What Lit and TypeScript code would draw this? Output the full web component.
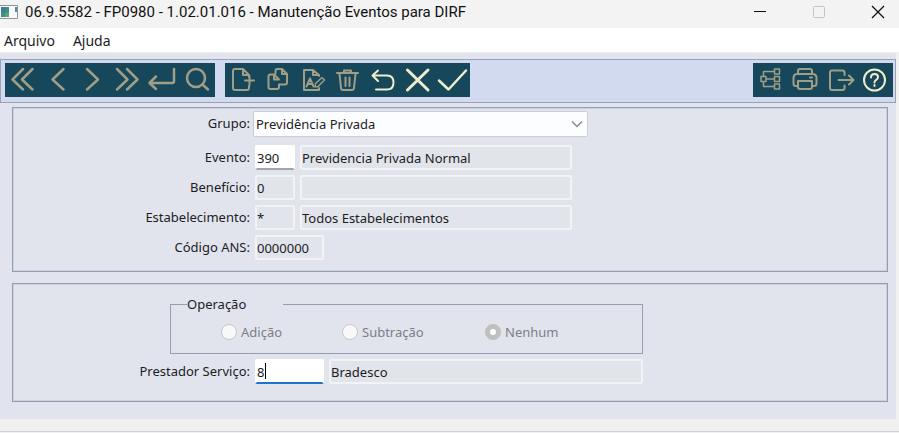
import { LitElement, html, css, svg, SVGTemplateResult } from "lit";
import { customElement, property, state } from "lit/decorators.js";

interface ToolButton {
  label: string;
  icon: SVGTemplateResult;
  active?: boolean;
}

const navigation: ToolButton[] = [
  { label: "Primeiro", icon: svg`<path d="M18 6 7.5 16.5 18 26.5M27.5 6 17 16.5l10.500 10"/>` },
  { label: "Anterior", icon: svg`<path d="M23.500 6 12.500 16.500l11 10"/>` },
  { label: "Próximo", icon: svg`<path d="m12 6 11 10.500-11 10"/>` },
  { label: "Último", icon: svg`<path d="m7 6 10.500 10.500L7 26.500M17 6l10.500 10.500-10.500 10"/>` },
  { label: "Confirmar chave", icon: svg`<path d="M29 6v12q0 2-2 2H5M11 13.500 4.500 20l6.500 6"/>` },
  { label: "Pesquisar", icon: svg`<circle cx="16" cy="15" r="9"/><path d="m22.500 21.500 5.500 5"/>` },
];

const editing: ToolButton[] = [
  {
    label: "Incluir",
    icon: svg`<path stroke-width="2" d="M24 14v-2l-6-6H10q-2 0-2 2v17q0 2 2 2h12q2 0 2-2v-2M18 6v6h6M20 17.500h9M24.500 13v9"/>`,
  },
  {
    label: "Copiar",
    icon: svg`<path stroke-width="2" d="M14 11.500h-3.500q-2 0-2 2V24q0 2 2 2H17q2 0 2-2v-2.500M14 11.500l5 5M14 11.500v5h5M22 6h-4.500q-2 0-2 2v2.500M22 6l5 5v8.500q0 2-2 2h-6M22 6v5h5"/>`,
  },
  {
    label: "Alterar",
    icon: svg`<path stroke-width="2" d="M24 13v-1l-6-5H9v20h15v-2M18 7v5h6"/><path stroke-width="2" d="m11.500 23.500 3.500-8 3.500 8M13 21h4"/><path stroke-width="1.500" d="m20 24 .5-3.500 6.500-6 2.500 2.500-6.500 6.500z"/>`,
  },
  {
    label: "Excluir",
    icon: svg`<path stroke-width="2" d="M7 10h21M14 9.500V7.500h7v2M9.500 11l1.500 14q.2 2 2 2h9q1.800 0 2-2l1.500-14M15.500 14.500V23M19.500 14.500V23"/>`,
  },
  { label: "Desfazer", active: true, icon: svg`<path stroke-width="2" d="M13 7.500 7.500 12.500 13 18M7.500 12.500H22q6.500 0 6.500 7t-6.500 7H11"/>` },
  { label: "Cancelar", active: true, icon: svg`<path stroke-width="3" d="m7.500 7 20.500 20M28 7 7.500 27"/>` },
  { label: "Confirmar", active: true, icon: svg`<path d="m4 17.500 9.500 9L31 7.500"/>` },
];

const utilities: ToolButton[] = [
  {
    label: "Estrutura",
    icon: svg`<path stroke-width="1.500" d="M8 13.500h5v5H8zM21.500 6h5v5h-5zM21.500 13.500h5v5h-5zM21.500 21h5v5h-5zM10.500 13.500v-5h11M13 16h8.500M10.500 18.500v5h11"/>`,
  },
  {
    label: "Imprimir",
    icon: svg`<path stroke-width="2" d="M10 11V8q0-2 2-2h10q2 0 2 2v3M10 23H8q-2.500 0-2.500-2.500V15q0-4 4-4h15q4 0 4 4v5.500q0 2.500-2.500 2.500h-2M10 18h14v6q0 2-2 2H12q-2 0-2-2zM22 14.500h2"/>`,
  },
  {
    label: "Sair",
    icon: svg`<path stroke-width="2" d="M21.500 12v-2.500q0-2-2-2H9q-2 0-2 2V25q0 2 2 2h10.500q2 0 2-2v-2.500M15.500 17H30M26 12.500l4.500 4.500-4.500 4.500"/>`,
  },
  {
    label: "Ajuda",
    active: true,
    icon: svg`<circle stroke-width="2" cx="16.500" cy="17" r="10.500"/><path stroke-width="2" d="M13 14.500q0-3.500 3.500-3.500t3.500 3q0 2-2 3-1.500 1-1.500 2.500M16.500 22v1"/>`,
  },
];

@customElement("tool-group")
export class ToolGroup extends LitElement {
  @property({ attribute: false }) items: ToolButton[] = [];

  static styles = css`
    :host {
      display: flex;
      background: #17475a;
    }
    .tool {
      width: 35px;
      height: 34px;
      padding: 0;
      border: 0;
      background: none;
      color: #a19e86;
    }
    .active {
      color: #f0edcb;
    }
    .icon {
      display: block;
      width: 35px;
      height: 34px;
      fill: none;
      stroke: currentColor;
      stroke-width: 2.5;
      stroke-linecap: round;
      stroke-linejoin: round;
    }
  `;

  render() {
    return this.items.map(
      (item) => html`<button class="tool ${item.active ? "active" : ""}" aria-label=${item.label}>
        <svg class="icon" viewBox="0 0 35 34" aria-hidden="true">${item.icon}</svg>
      </button>`,
    );
  }
}

@customElement("app-root")
export class AppRoot extends LitElement {
  @state() private provider = "8";

  static styles = css`
    :host {
      display: flex;
      flex-direction: column;
      min-height: 100vh;
      background: #f0f0f0;
      color: #1c1c24;
      font: 13px/16px "Noto Sans", sans-serif;
    }
    * {
      box-sizing: border-box;
    }
    .titlebar {
      display: flex;
      align-items: center;
      height: 28px;
      padding-bottom: 4px;
      background: #f3f3f3;
      color: #111;
    }
    .appicon {
      width: 18px;
      height: 14px;
      margin-right: 7px;
    }
    .title {
      flex: 1;
      margin: 0;
      font: 15px/20px Roboto, sans-serif;
      white-space: nowrap;
    }
    .controls {
      display: flex;
      gap: 17px;
    }
    .winbtn {
      width: 42px;
      height: 24px;
      padding: 0;
      border: 0;
      background: none;
    }
    .winicon {
      display: block;
      width: 14px;
      height: 14px;
      margin: 0 auto;
      fill: none;
      stroke: #111;
    }
    .menubar {
      display: flex;
      gap: 18px;
      height: 24px;
      padding: 4px;
      background: #fff;
    }
    .menuitem {
      padding: 0;
      border: 0;
      background: none;
      color: inherit;
      font: 14px/18px "Noto Sans", sans-serif;
    }
    .workspace {
      display: flex;
      flex-direction: column;
      margin-right: 3px;
      padding: 6px 0 17px;
      border-top: 1px solid #f0f0f0;
      background: #e1e4ed;
    }
    .toolbar {
      display: flex;
      align-items: flex-start;
      gap: 10px;
      height: 44px;
      padding: 3px 2px 0 4px;
      border: 1px solid #99a3b6;
      background: #d1daee;
    }
    .utilities {
      margin-left: auto;
    }
    .panel {
      display: flex;
      flex-direction: column;
      margin: 4px 8px 0 12px;
      border: 1px solid #929db0;
      box-shadow: inset 0 0 0 1px #cbd1de;
    }
    .record {
      gap: 5px;
      padding: 3px 0 11px;
    }
    .details {
      gap: 5px;
      margin-top: 11px;
      padding: 12px 0 17px;
    }
    .row {
      display: flex;
      gap: 5px;
      height: 25px;
    }
    .grouprow {
      gap: 3px;
      height: 26px;
      margin-bottom: 3px;
    }
    .caption {
      width: 237px;
      padding-top: 4px;
      text-align: right;
      white-space: nowrap;
    }
    .field {
      width: 40px;
      height: 25px;
      padding: 0;
      border: 2px solid #f2f3f5;
      border-radius: 2px;
      background: #e1e4ea;
      color: inherit;
      font: inherit;
      outline: none;
    }
    .medium {
      width: 69px;
    }
    .wide {
      width: 272px;
    }
    .wider {
      width: 314px;
    }
    .editable {
      border-color: #fff;
      border-bottom: 2px solid #a4a4a6;
      background: #fff;
    }
    .focused {
      border-bottom-color: #1a76c8;
      caret-color: transparent;
    }
    .caretbox {
      position: relative;
      display: flex;
    }
    .caret {
      position: absolute;
      left: 10px;
      top: 4px;
      width: 1px;
      height: 16px;
      background: #000;
    }
    .selectbox {
      display: grid;
      align-items: center;
      width: 335px;
    }
    .select {
      grid-area: 1 / 1;
      width: 100%;
      height: 26px;
      padding: 0 2px;
      border: 1px solid #c8cfd9;
      border-radius: 2px;
      background: #fcfdfe;
      color: inherit;
      font: inherit;
      appearance: none;
    }
    .arrow {
      grid-area: 1 / 1;
      justify-self: end;
      width: 12px;
      height: 8px;
      margin-right: 5px;
      fill: none;
      stroke: #888;
      stroke-width: 1.5;
      pointer-events: none;
    }
    .operation {
      width: 473px;
      height: 58px;
      margin: 0 0 0 157px;
      padding: 12px 0 0 50px;
      border: 1px solid #939eaf;
      color: #7d7f85;
    }
    .legend {
      width: 96px;
      margin-left: -34px;
      padding: 0;
      color: #1c1c24;
    }
    .options {
      display: grid;
      grid-template-columns: 121px 143px auto;
    }
    .option {
      display: flex;
      align-items: center;
      gap: 4px;
    }
    .radio {
      appearance: none;
      width: 16px;
      height: 16px;
      margin: 0;
      border: 1px solid #c8c8ca;
      border-radius: 50%;
      background: #f8f8f9;
    }
    .radio:checked {
      border: 5px solid #bfbfbf;
      background: #fff;
    }
    .footer {
      height: 13px;
      margin-bottom: 1px;
      border-bottom: 1px solid #d3d3d3;
    }
  `;

  private readonly rows = [
    { id: "evento", label: "Evento:", code: "390", name: "Previdencia Privada Normal", editable: true },
    { id: "beneficio", label: "Benefício:", code: "0", name: "" },
    { id: "estabelecimento", label: "Estabelecimento:", code: "*", name: "Todos Estabelecimentos" },
  ];

  render() {
    return html`
      <header class="titlebar">
        <svg class="appicon" viewBox="0 0 18 14" aria-hidden="true">
          <path d="M0 .5h17.500v13H0" fill="#fafafa" stroke="#8f9498" />
          <path d="M1 2h8v10H1z" fill="#3f8f86" />
          <path d="M1 2h4v5H1z" fill="#397f9b" />
          <path d="M5 8h4v4H5z" fill="#58a674" />
          <path d="M15 2h2v5h-2z" fill="#4a90a4" />
        </svg>
        <h1 class="title">06.9.5582 - FP0980 - 1.02.01.016 - Manutenção Eventos para DIRF</h1>
        <div class="controls">
          <button class="winbtn" aria-label="Minimizar">
            <svg class="winicon" viewBox="0 0 14 14"><path d="M1 6.500h12" /></svg>
          </button>
          <button class="winbtn" aria-label="Maximizar" disabled>
            <svg class="winicon" viewBox="0 0 14 14"><rect x="1.500" y="1.500" width="11" height="11" rx="1" stroke="#c4c4c4" /></svg>
          </button>
          <button class="winbtn" aria-label="Fechar">
            <svg class="winicon" viewBox="0 0 14 14"><path d="m1 1 12 12M13 1 1 13" stroke-width="1.300" /></svg>
          </button>
        </div>
      </header>
      <nav class="menubar">
        <button class="menuitem">Arquivo</button>
        <button class="menuitem">Ajuda</button>
      </nav>
      <main class="workspace">
        <div class="toolbar">
          <tool-group .items=${navigation}></tool-group>
          <tool-group .items=${editing}></tool-group>
          <tool-group class="utilities" .items=${utilities}></tool-group>
        </div>
        <section class="panel record">
          <div class="row grouprow">
            <label class="caption" for="grupo">Grupo:</label>
            <div class="selectbox">
              <select class="select" id="grupo">
                <option>Previdência Privada</option>
              </select>
              <svg class="arrow" viewBox="0 0 12 8" aria-hidden="true"><path d="m1 1.500 5 5 5-5" /></svg>
            </div>
          </div>
          ${this.rows.map(
            (row) => html`<div class="row">
              <label class="caption" for=${row.id}>${row.label}</label>
              <input class="field ${row.editable ? "editable" : ""}" id=${row.id} .value=${row.code} ?readonly=${!row.editable} />
              <input class="field wide" aria-label="Descrição" .value=${row.name} readonly />
            </div>`,
          )}
          <div class="row">
            <label class="caption" for="ans">Código ANS:</label>
            <input class="field medium" id="ans" .value=${"0000000"} readonly />
          </div>
        </section>
        <section class="panel details">
          <fieldset class="operation">
            <legend class="legend">Operação</legend>
            <div class="options">
              ${["Adição", "Subtração", "Nenhum"].map(
                (name) => html`<label class="option">
                  <input class="radio" type="radio" name="operacao" disabled ?checked=${name === "Nenhum"} />${name}
                </label>`,
              )}
            </div>
          </fieldset>
          <div class="row">
            <label class="caption" for="prestador">Prestador Serviço:</label>
            <span class="caretbox">
              <input
                class="field medium editable focused"
                id="prestador"
                .value=${this.provider}
                @input=${(e: Event) => (this.provider = (e.target as HTMLInputElement).value)}
              />
              <span class="caret"></span>
            </span>
            <input class="field wider" aria-label="Nome do prestador" value="Bradesco" readonly />
          </div>
        </section>
      </main>
      <footer class="footer"></footer>
    `;
  }
}
